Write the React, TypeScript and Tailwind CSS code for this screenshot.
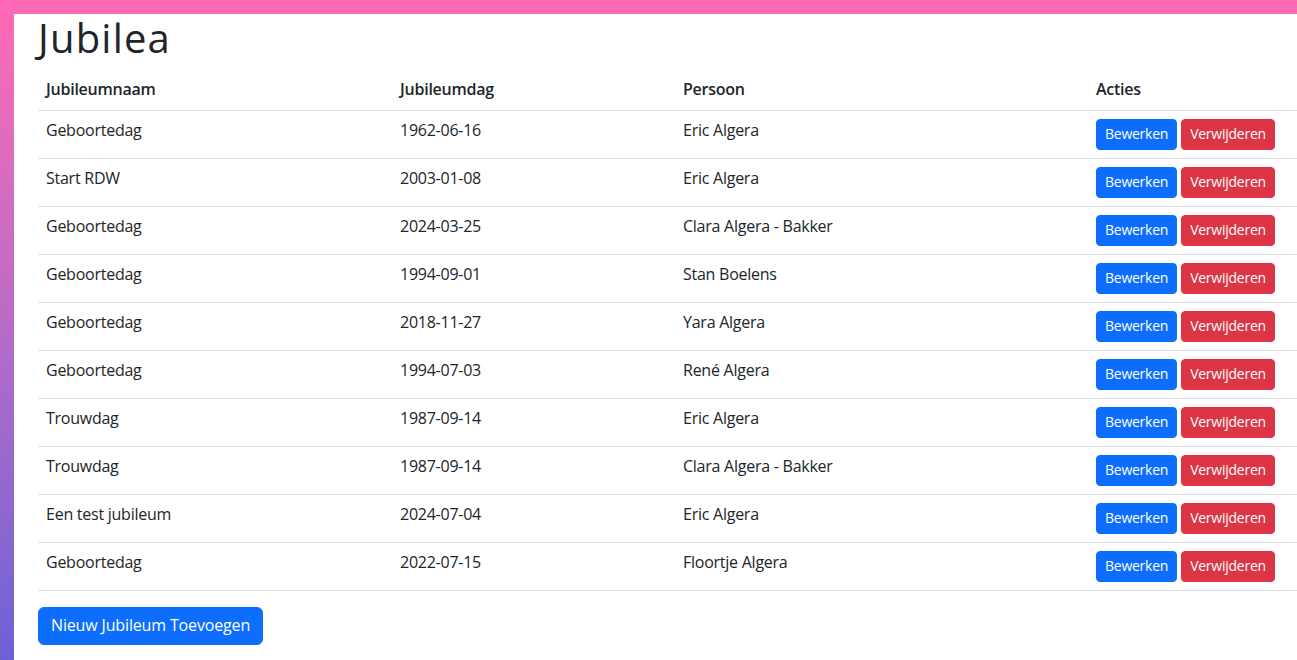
const rows = [
  ['Geboortedag', '1962-06-16', 'Eric Algera'],
  ['Start RDW', '2003-01-08', 'Eric Algera'],
  ['Geboortedag', '2024-03-25', 'Clara Algera - Bakker'],
  ['Geboortedag', '1994-09-01', 'Stan Boelens'],
  ['Geboortedag', '2018-11-27', 'Yara Algera'],
  ['Geboortedag', '1994-07-03', 'René Algera'],
  ['Trouwdag', '1987-09-14', 'Eric Algera'],
  ['Trouwdag', '1987-09-14', 'Clara Algera - Bakker'],
  ['Een test jubileum', '2024-07-04', 'Eric Algera'],
  ['Geboortedag', '2022-07-15', 'Floortje Algera'],
]

export default function App() {
  return (
    <div className="h-[660px] overflow-hidden bg-gradient-to-b from-[#ff69b4] to-[#6c61d6] pt-[14px] pl-[14px] font-['Open_Sans',sans-serif] tracking-[-0.25px] text-[#212529]">
      <div className="h-full bg-white pl-6">
        <h1 className="mb-2 text-[40px] leading-[48px] tracking-[1.2px]">Jubilea</h1>
        <table className="w-full border-collapse text-left text-base">
          <thead>
            <tr className="border-b border-[#dee2e6]">
              <th className="w-[354px] px-2 pt-[7px] pb-[9px] font-semibold leading-6">Jubileumnaam</th>
              <th className="w-[283px] px-2 pt-[7px] pb-[9px] font-semibold leading-6">Jubileumdag</th>
              <th className="w-[413px] px-2 pt-[7px] pb-[9px] font-semibold leading-6">Persoon</th>
              <th className="px-2 pt-[7px] pb-[9px] font-semibold leading-6">Acties</th>
            </tr>
          </thead>
          <tbody>
            {rows.map((r, i) => (
              <tr key={i} className="border-b border-[#dee2e6] align-top">
                <td className="px-2 pt-[7px] pb-[9px] leading-6">{r[0]}</td>
                <td className="px-2 pt-[7px] pb-[9px] leading-6">{r[1]}</td>
                <td className="px-2 pt-[7px] pb-[9px] leading-6">{r[2]}</td>
                <td className="px-2 py-2">
                  <div className="flex gap-1">
                    <button className="rounded border border-[#0d6efd] bg-[#0d6efd] px-2 pt-[3px] pb-[5px] text-sm leading-[21px] text-white">Bewerken</button>
                    <button className="rounded border border-[#dc3545] bg-[#dc3545] px-2 pt-[3px] pb-[5px] text-sm leading-[21px] text-white">Verwijderen</button>
                  </div>
                </td>
              </tr>
            ))}
          </tbody>
        </table>
        <button className="mt-4 rounded-md border border-[#0d6efd] bg-[#0d6efd] px-3 pt-[5px] pb-[7px] text-base leading-6 tracking-[-0.15px] text-white">Nieuw Jubileum Toevoegen</button>
      </div>
    </div>
  )
}
